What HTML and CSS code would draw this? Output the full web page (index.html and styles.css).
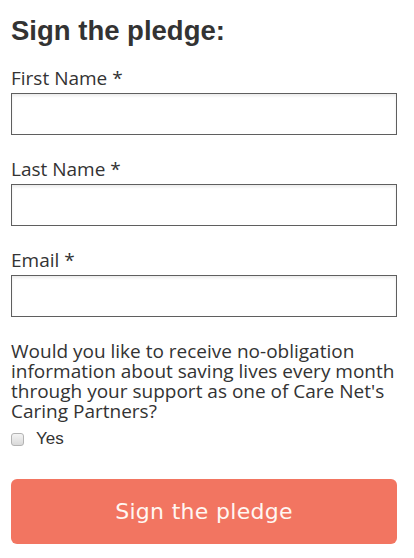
FILE: index.html
```html
<!DOCTYPE html>
<html lang="en">
<head>
<meta charset="utf-8">
<title>Sign the pledge</title>
<link rel="stylesheet" href="styles.css">
</head>
<body>
<form class="pledge">
  <h1 class="pledge-title">Sign the pledge:</h1>
  <div class="field">
    <label class="field-label" for="first">First Name *</label>
    <input class="field-input" id="first" type="text">
  </div>
  <div class="field">
    <label class="field-label" for="last">Last Name *</label>
    <input class="field-input" id="last" type="text">
  </div>
  <div class="field">
    <label class="field-label" for="email">Email *</label>
    <input class="field-input" id="email" type="email">
  </div>
  <p class="question">Would you like to receive no-obligation information about saving lives every month through your support as one of Care Net's Caring Partners?</p>
  <label class="check">
    <input class="check-box" type="checkbox">
    <span class="check-text">Yes</span>
  </label>
  <button class="submit" type="button">Sign the pledge</button>
</form>
</body>
</html>
```
FILE: styles.css
```css
html, body {
  margin: 0;
  padding: 0;
  background: #ffffff;
}

.pledge {
  display: flex;
  flex-direction: column;
  padding: 15px 17px 0 11px;
  color: #333333;
}

.pledge-title {
  margin: 0;
  font-family: "Liberation Sans", Arial, sans-serif;
  font-weight: bold;
  font-size: 27.5px;
  line-height: 32px;
  color: #333333;
}

.field {
  display: flex;
  flex-direction: column;
  gap: 3px;
}

.field:first-of-type {
  margin-top: 19px;
}

.field + .field {
  margin-top: 22px;
}

.field-label {
  font-family: "Open Sans", sans-serif;
  font-size: 19px;
  line-height: 24px;
  color: #333333;
}

.field-input {
  box-sizing: border-box;
  width: 100%;
  height: 42px;
  margin: 0;
  border: 1px solid #5f5f5f;
  border-radius: 0;
  background: #ffffff;
  box-shadow: inset 0 2px 3px rgba(0, 0, 0, 0.08);
  font-family: "Open Sans", sans-serif;
  font-size: 16px;
  padding: 0 8px;
}

.question {
  margin: 24px 0 0;
  font-family: "Open Sans", sans-serif;
  font-size: 19px;
  line-height: 20px;
  color: #333333;
}

.check {
  display: flex;
  align-items: center;
  gap: 12px;
  margin-top: 9px;
  height: 18px;
}

.check-box {
  appearance: none;
  -webkit-appearance: none;
  box-sizing: border-box;
  width: 13px;
  height: 13px;
  margin: 0;
  border: 1px solid #b3b3b3;
  border-radius: 3px;
  background: linear-gradient(#f4f4f4, #d9d9d9);
}

.check-text {
  font-family: "Liberation Sans", Arial, sans-serif;
  font-size: 17px;
  color: #333333;
}

.submit {
  margin-top: 31px;
  height: 65px;
  width: 100%;
  border: 0;
  border-radius: 6px;
  background: #f27561;
  color: #fff7f2;
  font-family: "DejaVu Sans", sans-serif;
  font-size: 22px;
  letter-spacing: 0.3px;
}
```
